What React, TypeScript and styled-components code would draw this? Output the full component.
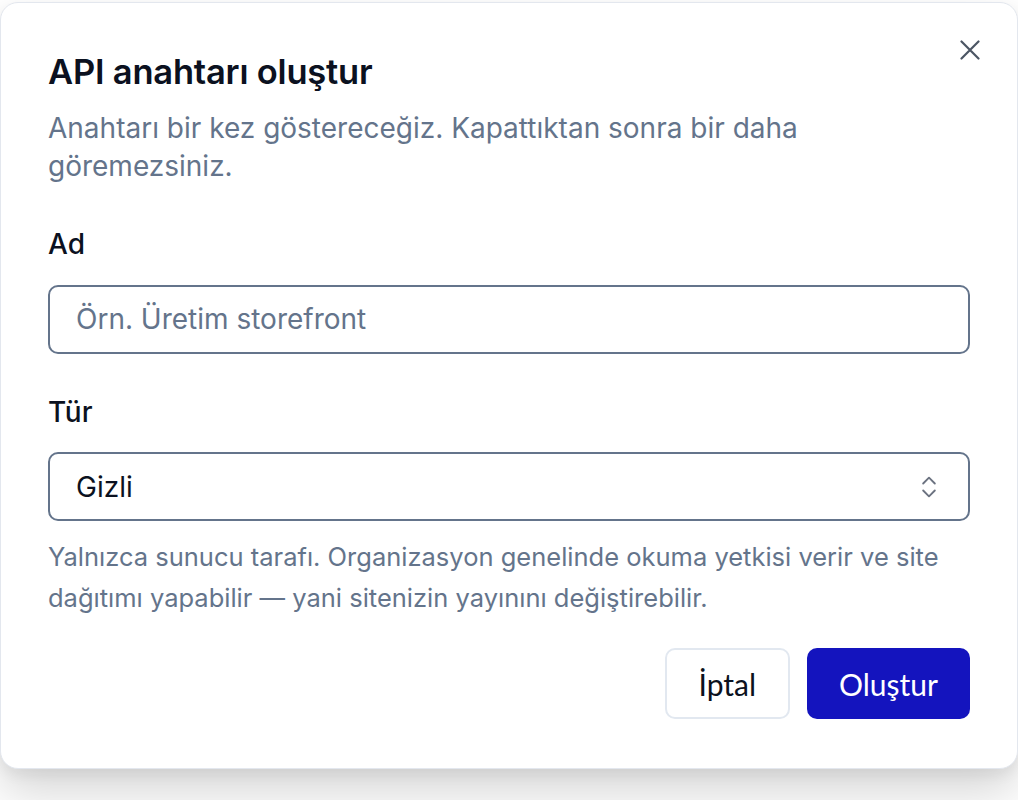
import styled, { createGlobalStyle } from 'styled-components';
import { ChevronsUpDown } from 'lucide-react';

const GlobalStyle = createGlobalStyle`
    html, body {
        margin: 0;
        padding: 0;
        background: #ffffff;
    }
    body {
        font-family: 'Inter', 'Noto Sans', sans-serif;
    }
    #root {
        min-height: 100vh;
    }
    * {
        box-sizing: border-box;
    }
`;

const App = () => (
    <>
        <GlobalStyle />
        <Dialog role="dialog" aria-labelledby="dialog-title">
            <CloseButton aria-label="Kapat">
                <svg width="20" height="20" viewBox="0 0 20 20" fill="none">
                    <path d="M1.5 1.5L18.5 18.5M18.5 1.5L1.5 18.5" stroke="currentColor" strokeWidth="2.2" strokeLinecap="round" />
                </svg>
            </CloseButton>
            <Header>
                <Title id="dialog-title">API anahtarı oluştur</Title>
                <Description>Anahtarı bir kez göstereceğiz. Kapattıktan sonra bir daha göremezsiniz.</Description>
            </Header>
            <Field>
                <Label htmlFor="key-name">Ad</Label>
                <Input id="key-name" placeholder="Örn. Üretim storefront" />
            </Field>
            <Field>
                <Label htmlFor="key-type">Tür</Label>
                <SelectBox id="key-type" type="button">
                    <span>Gizli</span>
                    <ChevronsUpDown size={28} strokeWidth={1.6} color="#6b7280" />
                </SelectBox>
                <Hint>
                    Yalnızca sunucu tarafı. Organizasyon genelinde okuma yetkisi verir ve site dağıtımı yapabilir — yani sitenizin yayınını değiştirebilir.
                </Hint>
            </Field>
            <Footer>
                <Button isPrimary={false}>İptal</Button>
                <Button isPrimary>Oluştur</Button>
            </Footer>
        </Dialog>
    </>
);

export default App;


const Dialog = styled.div`
    position: relative;
    width: 1018px;
    margin-top: 2px;
    padding: 49px 47px 49px 47px;
    background-color: #fff;
    border: 1px solid #e3e7ee;
    border-radius: 18px;
    box-shadow: 0 24px 48px rgba(0, 0, 0, 0.16), 0 6px 14px rgba(0, 0, 0, 0.06);
    display: flex;
    flex-direction: column;
`;

const CloseButton = styled.button`
    position: absolute;
    top: 37px;
    right: 37px;
    width: 20px;
    height: 20px;
    padding: 0;
    border: none;
    background: none;
    color: #4b5563;
    display: flex;
    align-items: center;
    justify-content: center;
    cursor: pointer;
`;

const Header = styled.div`
    display: flex;
    flex-direction: column;
    gap: 17px;
    margin-bottom: 41px;
`;

const Title = styled.h2`
    margin: 0;
    font-size: 34.5px;
    line-height: 40px;
    font-weight: 600;
    color: #0b1120;
    letter-spacing: -0.2px;
`;

const Description = styled.p`
    margin: 0;
    font-size: 28px;
    line-height: 38px;
    color: #64748b;
    max-width: 800px;
`;

const Field = styled.div`
    display: flex;
    flex-direction: column;
    margin-bottom: 40px;
`;

const Label = styled.label`
    font-size: 28px;
    line-height: 36px;
    font-weight: 500;
    color: #0b1120;
    margin-bottom: 22.5px;
`;

const Input = styled.input`
    height: 69px;
    padding: 0 26px;
    font-family: 'Inter', sans-serif;
    font-size: 28px;
    color: #0b1120;
    border: 2px solid #64748b;
    border-radius: 10px;
    outline: none;

    &::placeholder {
        color: #64748b;
    }
`;

const SelectBox = styled.button`
    height: 69px;
    padding: 0 25px 0 26px;
    display: flex;
    align-items: center;
    justify-content: space-between;
    font-family: 'Inter', sans-serif;
    font-size: 28px;
    color: #0b1120;
    background: #fff;
    border: 2px solid #64748b;
    border-radius: 10px;
    text-align: left;
    cursor: pointer;
`;

const Hint = styled.p`
    margin: 14.5px 0 0 0;
    font-size: 25.5px;
    line-height: 41px;
    color: #64748b;
`;

const Footer = styled.div`
    display: flex;
    justify-content: flex-end;
    gap: 17px;
    margin-top: -9.5px;
`;

const Button = styled.button<{ isPrimary: boolean }>`
    height: 71px;
    padding: 0 32px;
    font-family: 'Lato', 'Inter', sans-serif;
    font-size: 30px;
    font-weight: 400;
    background-color: ${({ isPrimary }) => (isPrimary ? '#1414be' : '#fff')};
    color: ${({ isPrimary }) => (isPrimary ? '#fff' : '#0b1120')};
    border: ${({ isPrimary }) => (isPrimary ? 'none' : '2px solid #e2e8f0')};
    border-radius: 10px;
    cursor: pointer;
`;
